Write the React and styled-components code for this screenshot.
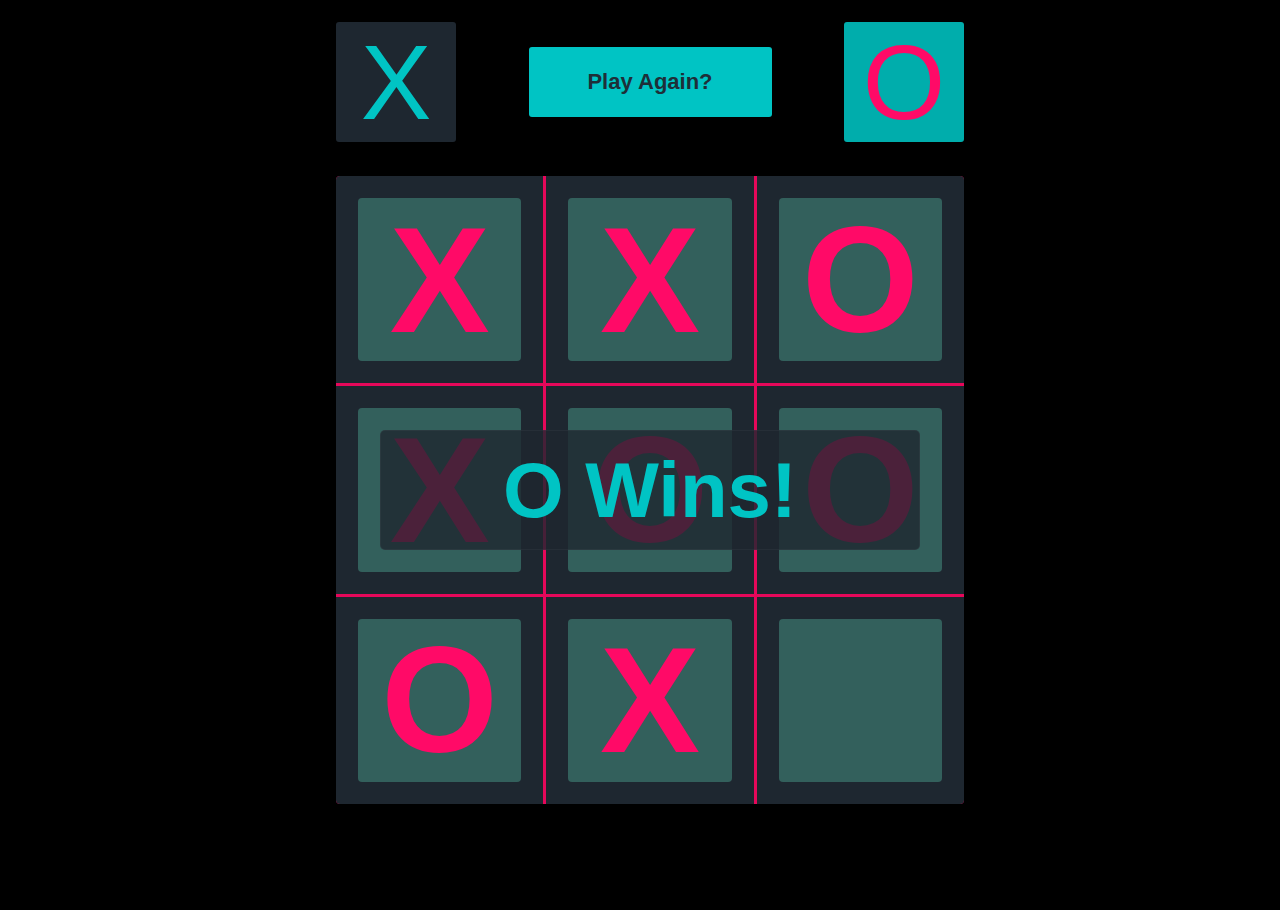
import React from "react";
import styled, { createGlobalStyle } from "styled-components";

const board = ["X", "X", "O", "X", "O", "O", "O", "X", ""];

function App() {
    return (
        <>
            <GlobalStyle />
            <Page>
                <Game>
                    <TopBar>
                        <PlayerBox>
                            <PlayerMark $color="#00c4c4">X</PlayerMark>
                        </PlayerBox>
                        <PlayAgain>Play Again?</PlayAgain>
                        <PlayerBox $active>
                            <PlayerMark $color="#ff0a67">O</PlayerMark>
                        </PlayerBox>
                    </TopBar>
                    <BoardWrap>
                        <Board>
                            {board.map((mark, i) => (
                                <Cell key={i}>
                                    <Tile>{mark && <Mark>{mark}</Mark>}</Tile>
                                </Cell>
                            ))}
                        </Board>
                        <Overlay>
                            <Result>O Wins!</Result>
                        </Overlay>
                    </BoardWrap>
                </Game>
            </Page>
        </>
    );
}

export default App;

const GlobalStyle = createGlobalStyle`
    * {
        box-sizing: border-box;
    }
    html, body {
        margin: 0;
        background: #000;
        font-family: "Liberation Sans", Arial, sans-serif;
    }
`;
const Page = styled.main`
    min-height: 910px;
    display: flex;
    justify-content: center;
    padding-top: 22px;
    padding-left: 20px;
`;
const Game = styled.div`
    width: 628px;
    display: flex;
    flex-direction: column;
    gap: 34px;
`;
const TopBar = styled.header`
    display: flex;
    align-items: center;
    justify-content: space-between;
`;
const PlayerBox = styled.div`
    width: 120px;
    height: 120px;
    border-radius: 3px;
    background: ${(p) => (p.$active ? "#00adac" : "#1e2730")};
    display: flex;
    align-items: center;
    justify-content: center;
`;
const PlayerMark = styled.span`
    font-size: 106px;
    line-height: 1;
    font-weight: 400;
    color: ${(p) => p.$color};
`;
const PlayAgain = styled.button`
    width: 243px;
    height: 70px;
    border: none;
    border-radius: 3px;
    background: #00c4c4;
    color: #1e2f38;
    font-family: "Liberation Sans", Arial, sans-serif;
    font-size: 22px;
    font-weight: 700;
    cursor: pointer;
`;
const BoardWrap = styled.section`
    position: relative;
`;
const Board = styled.div`
    display: grid;
    grid-template-columns: repeat(3, 1fr);
    gap: 3px;
    background: #e6085a;
    border-radius: 4px;
    overflow: hidden;
`;
const Cell = styled.div`
    background: #1e2730;
    padding: 22px;
`;
const Tile = styled.div`
    aspect-ratio: 1;
    background: #33605c;
    border-radius: 4px;
    display: flex;
    align-items: center;
    justify-content: center;
`;
const Mark = styled.span`
    font-size: 150px;
    font-weight: 700;
    line-height: 1;
    color: #ff0a67;
`;
const Overlay = styled.div`
    position: absolute;
    top: 50%;
    left: 50%;
    transform: translate(-50%, -50%);
    width: 540px;
    height: 120px;
    border-radius: 5px;
    background: rgba(30, 39, 48, 0.8);
    border: 1px solid rgba(255, 255, 255, 0.04);
    display: flex;
    align-items: center;
    justify-content: center;
`;
const Result = styled.h2`
    margin: 0;
    font-size: 78px;
    font-weight: 700;
    line-height: 1;
    color: #00c4c4;
`;
